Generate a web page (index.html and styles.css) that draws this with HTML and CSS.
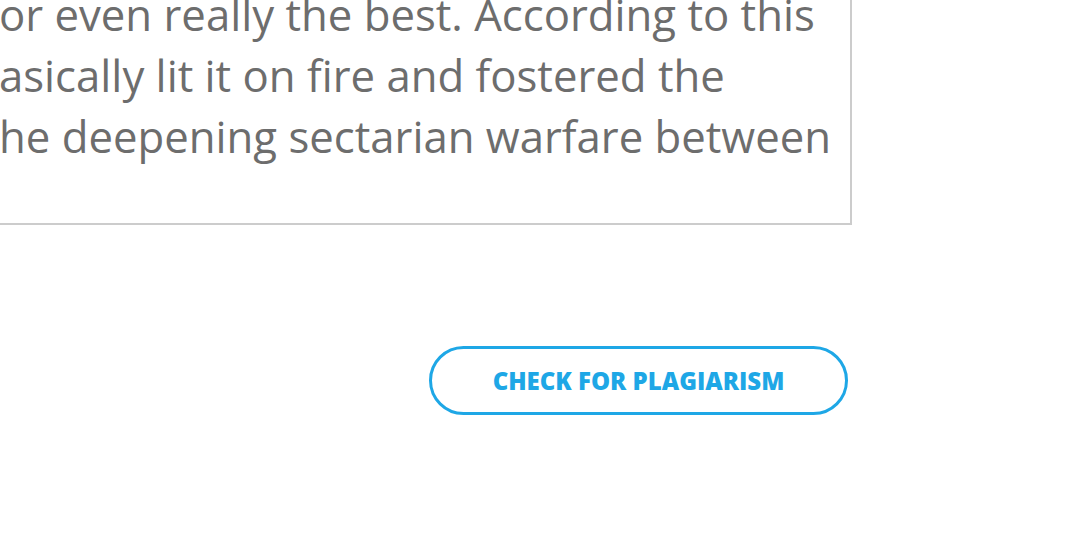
FILE: index.html
```html
<!DOCTYPE html>
<html lang="en">
<head>
<meta charset="utf-8">
<title>Plagiarism checker</title>
<link rel="stylesheet" href="styles.css">
</head>
<body>
<main class="page">
  <div class="editor">
    <p class="line">or even really the best. According to this</p>
    <p class="line">asically lit it on fire and fostered the</p>
    <p class="line">he deepening sectarian warfare between</p>
  </div>
  <div class="actions">
    <button class="btn" type="button">Check for plagiarism</button>
  </div>
</main>
</body>
</html>
```

FILE: styles.css
```css
html, body {
  margin: 0;
  padding: 0;
  background: #ffffff;
  overflow: hidden;
}

body {
  font-family: "Open Sans", "Liberation Sans", sans-serif;
}

.page {
  width: 852px;
}

.editor {
  box-sizing: border-box;
  margin-left: -300px;
  margin-top: -60px;
  width: 1152px;
  border: 2px solid #cccccc;
  padding: 42px 20px 56px 297px;
  color: #6d6d6d;
  font-size: 43.7px;
  line-height: 61px;
}

.line {
  margin: 0;
  white-space: nowrap;
}

.actions {
  display: flex;
  justify-content: flex-end;
  margin-top: 121px;
  padding-right: 4px;
}

.btn {
  box-sizing: border-box;
  width: 419px;
  height: 69px;
  border: 3px solid #1ea7e6;
  border-radius: 35px;
  background: #ffffff;
  color: #1ea7e6;
  font-family: "Open Sans", "Liberation Sans", sans-serif;
  font-weight: 800;
  font-size: 24px;
  text-transform: uppercase;
  padding: 0;
  cursor: pointer;
}
```
